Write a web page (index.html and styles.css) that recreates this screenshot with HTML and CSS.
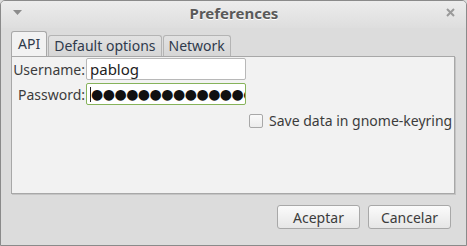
FILE: index.html
```html
<!DOCTYPE html>
<html>
<head>
    <meta charset="utf-8">
    <title>Preferences</title>
    <link rel="stylesheet" href="styles.css">
</head>
<body>
    <div class="window">
        <div class="titlebar">
            <span class="menu-arrow">
                <svg width="9" height="5" viewBox="0 0 9 5"><path d="M0 0 H9 L4.5 5 Z" fill="#8c8c8c"/></svg>
            </span>
            <span class="title">Preferences</span>
            <span class="close">
                <svg width="9" height="9" viewBox="0 0 9 9"><path d="M1 1 L8 8 M8 1 L1 8" stroke="#9a9a9a" stroke-width="2"/></svg>
            </span>
        </div>
        <div class="content">
            <div class="tabs">
                <div class="tab active">API</div>
                <div class="tab">Default options</div>
                <div class="tab">Network</div>
            </div>
            <div class="panel">
                <div class="form">
                    <label class="field-label">Username:</label>
                    <div class="entry">pablog</div>
                    <label class="field-label">Password:</label>
                    <div class="entry focused"><span class="cursor"></span><span class="dots">●●●●●●●●●●●●●●</span></div>
                </div>
                <label class="check">
                    <span class="box"></span>
                    <span>Save data in gnome-keyring</span>
                </label>
            </div>
            <div class="buttons">
                <button class="btn">Aceptar</button>
                <button class="btn">Cancelar</button>
            </div>
        </div>
    </div>
</body>
</html>
```

FILE: styles.css
```css
body {
    margin: 0;
    font-family: "Noto Sans", sans-serif;
    font-size: 14px;
    color: #3c3c3c;
    background-color: #dcdcdc;
}

.window {
    width: 467px;
    height: 246px;
    box-sizing: border-box;
    border: 1px solid #8a8a8a;
    border-radius: 5px 5px 0 0;
    background-color: #dcdcdc;
    display: flex;
    flex-direction: column;
    overflow: hidden;
}

.titlebar {
    height: 27px;
    box-sizing: border-box;
    display: flex;
    align-items: center;
    padding: 0 11px 4px 12px;
    background: linear-gradient(#ececec, #dedede);
}

.menu-arrow {
    width: 9px;
    display: flex;
}

.title {
    flex: 1;
    text-align: center;
    font-weight: bold;
    font-size: 15px;
    color: #5a5a5a;
    text-shadow: 0 1px 0 #fff;
}

.close {
    width: 9px;
    display: flex;
}

.content {
    flex: 1;
    display: flex;
    flex-direction: column;
    padding: 4px 10px 0 10px;
}

.tabs {
    display: flex;
    align-items: flex-end;
    gap: 1px;
    height: 24px;
    position: relative;
    z-index: 1;
}

.tab {
    height: 21px;
    box-sizing: border-box;
    padding: 0 5px;
    line-height: 19px;
    border: 1px solid #b4b4b4;
    border-bottom: none;
    border-radius: 3px 3px 0 0;
    background: linear-gradient(#e2e2e2, #d6d6d6);
    color: #2f3a4c;
}

.tab.active {
    height: 25px;
    line-height: 23px;
    padding: 0 6px;
    background-color: #f2f2f2;
    background-image: none;
    border-color: #a8a8a8;
}

.panel {
    height: 138px;
    box-sizing: border-box;
    border: 1px solid #a8a8a8;
    background-color: #f2f2f2;
    box-shadow: 1px 1px 0 #c4c4c4;
    padding: 1px 0 0 1px;
    margin-right: 1px;
}

.form {
    display: grid;
    grid-template-columns: 73px 160px;
    row-gap: 3px;
    align-items: center;
}

.field-label {
    text-align: right;
    padding-right: 1px;
    white-space: nowrap;
}

.entry {
    height: 22px;
    box-sizing: border-box;
    border: 1px solid #b8b8b8;
    border-radius: 2px;
    background-color: #fff;
    padding: 0 3px;
    line-height: 20px;
    font-size: 15px;
    color: #222;
    overflow: hidden;
    white-space: nowrap;
}

.entry.focused {
    border-color: #86b35a;
    padding-left: 3px;
    display: flex;
    align-items: center;
}

.cursor {
    width: 1px;
    height: 15px;
    background-color: #222;
    flex-shrink: 0;
}

.dots {
    font-family: "DejaVu Sans", sans-serif;
    font-size: 14px;
    letter-spacing: -0.5px;
    color: #111;
}

.check {
    display: flex;
    align-items: center;
    gap: 6px;
    margin: 6px 0 0 236px;
}

.box {
    width: 12px;
    height: 12px;
    border: 1px solid #a8a8a8;
    border-radius: 2px;
    background: linear-gradient(#fafafa, #ececec);
}

.buttons {
    display: flex;
    justify-content: flex-end;
    gap: 8px;
    margin-top: 11px;
    padding-right: 5px;
}

.btn {
    width: 83px;
    height: 24px;
    font-family: "Noto Sans", sans-serif;
    font-size: 14px;
    color: #3c3c3c;
    border: 1px solid #a8a8a8;
    border-radius: 3px;
    background: linear-gradient(#fbfbfb, #e6e6e6);
    padding: 0;
}
```
